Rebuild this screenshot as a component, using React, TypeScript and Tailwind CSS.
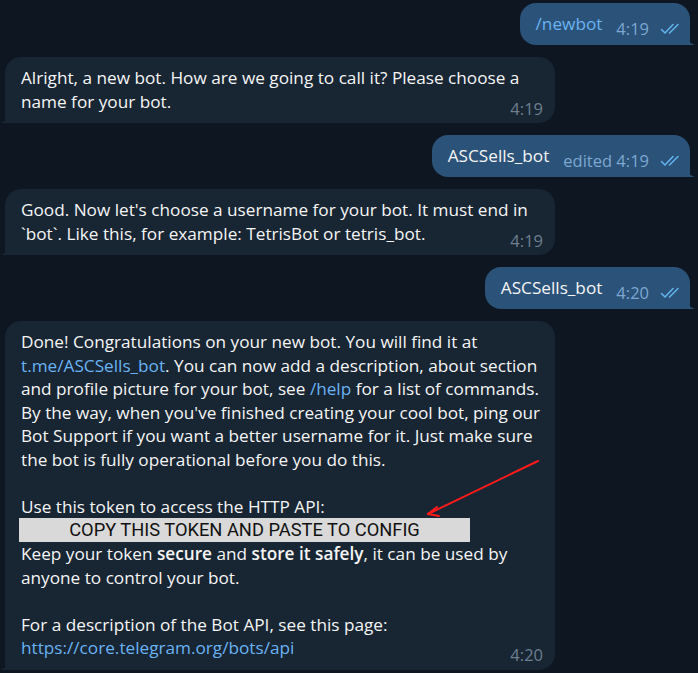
import React from "react";

const Checks = () => (
  <svg width="23" height="12" viewBox="0 0 23 12" fill="none" stroke="#64b5ef" strokeWidth="1.5" strokeLinecap="round" strokeLinejoin="round">
    <path d="M1.5 6.5 L5 10 L13 1.5" />
    <path d="M9.5 10 L18 1.5" />
  </svg>
);

const OutTail = () => (
  <svg className="absolute right-[-6px] bottom-0" width="10" height="12" viewBox="0 0 10 12">
    <path d="M0 0 C0 6 3 10 9 12 L0 12 Z" fill="#2b5278" />
  </svg>
);

const InTail = () => (
  <svg className="absolute left-[-6px] bottom-0" width="10" height="12" viewBox="0 0 10 12">
    <path d="M10 0 C10 6 7 10 1 12 L10 12 Z" fill="#182533" />
  </svg>
);

function Outgoing({ text, time, edited, link }: { text: string; time: string; edited?: boolean; link?: boolean }) {
  return (
    <div className="flex justify-end pr-[8px]">
      <div className="relative flex items-start h-[42px] bg-[#2b5278] rounded-[16px] rounded-br-[4px] pl-[16px] pr-[7px] whitespace-nowrap">
        <span className={`leading-[24px] pt-[9px] text-[17.2px] ${link ? "text-[#6ab3f3]" : "text-[#f5f5f5]"}`}>{text}</span>
        <span className="ml-[14px] mt-[16px] text-[16.5px] leading-[20px] text-[#7da8d3]">
          {edited ? "edited " : ""}
          {time}
        </span>
        <span className="ml-[11px] mt-[20px]">
          <Checks />
        </span>
        <OutTail />
      </div>
    </div>
  );
}

function Time({ t }: { t: string }) {
  return <span className="ml-auto self-end translate-y-[5px] text-[16.5px] leading-[20px] text-[#6d7f8f] pl-3">{t}</span>;
}

const Link = ({ children }: { children: React.ReactNode }) => <span className="text-[#6ab3f3]">{children}</span>;

export default function App() {
  return (
    <div className="relative w-[698px] h-[673px] overflow-hidden bg-[#0e1621] font-['Open_Sans',sans-serif] text-[#f5f5f5] text-[17.2px]">
      <div className="flex flex-col gap-[12px] pt-[3px]">
        <Outgoing text="/newbot" time="4:19" link />

        <div className="pl-[5px]">
          <div className="relative w-[550px] whitespace-nowrap bg-[#182533] rounded-[16px] rounded-bl-[4px] pl-[16px] pr-[12px] pt-[9px] pb-[9px] leading-[24px]">
            <div>Alright, a new bot. How are we going to call it? Please choose a</div>
            <div className="flex">
              <span>name for your bot.</span>
              <Time t="4:19" />
            </div>
            <InTail />
          </div>
        </div>

        <Outgoing text="ASCSells_bot" time="4:19" edited />

        <div className="pl-[5px]">
          <div className="relative w-[550px] whitespace-nowrap bg-[#182533] rounded-[16px] rounded-bl-[4px] pl-[16px] pr-[12px] pt-[9px] pb-[9px] leading-[24px]">
            <div>Good. Now let's choose a username for your bot. It must end in</div>
            <div className="flex">
              <span>`bot`. Like this, for example: TetrisBot or tetris_bot.</span>
              <Time t="4:19" />
            </div>
            <InTail />
          </div>
        </div>

        <Outgoing text="ASCSells_bot" time="4:20" />

        <div className="pl-[5px]">
          <div className="relative w-[550px] whitespace-nowrap bg-[#182533] rounded-[16px] rounded-bl-[4px] pl-[16px] pr-[12px] pt-[9px] pb-[10px] leading-[23.5px]">
            <div>Done! Congratulations on your new bot. You will find it at</div>
            <div>
              <Link>t.me/ASCSells_bot</Link>. You can now add a description, about section
            </div>
            <div>
              and profile picture for your bot, see <Link>/help</Link> for a list of commands.
            </div>
            <div>By the way, when you've finished creating your cool bot, ping our</div>
            <div>Bot Support if you want a better username for it. Just make sure</div>
            <div>the bot is fully operational before you do this.</div>
            <div className="h-[23.5px]" />
            <div>Use this token to access the HTTP API:</div>
            <div className="-ml-[2px] flex items-center justify-center w-[451px] h-[24px] bg-[#d9d9d9] text-[#111] font-['Roboto',sans-serif] text-[18.3px] leading-[24px]">
              COPY THIS TOKEN AND PASTE TO CONFIG
            </div>
            <div>
              Keep your token <b className="font-semibold">secure</b> and <b className="font-semibold">store it safely</b>, it can be used by
            </div>
            <div>anyone to control your bot.</div>
            <div className="h-[23.5px]" />
            <div>For a description of the Bot API, see this page:</div>
            <div className="flex">
              <Link>https://core.telegram.org/bots/api</Link>
              <Time t="4:20" />
            </div>
            <InTail />
          </div>
        </div>
      </div>

      <svg className="absolute left-0 top-0 pointer-events-none" width="698" height="673">
        <g stroke="#ff1a1a" strokeWidth="2" strokeLinecap="round" strokeLinejoin="round" fill="none">
          <path d="M538 461 L428 514" />
          <path d="M428 514 L437 507" />
          <path d="M428 514 L439 516" />
        </g>
      </svg>
    </div>
  );
}
